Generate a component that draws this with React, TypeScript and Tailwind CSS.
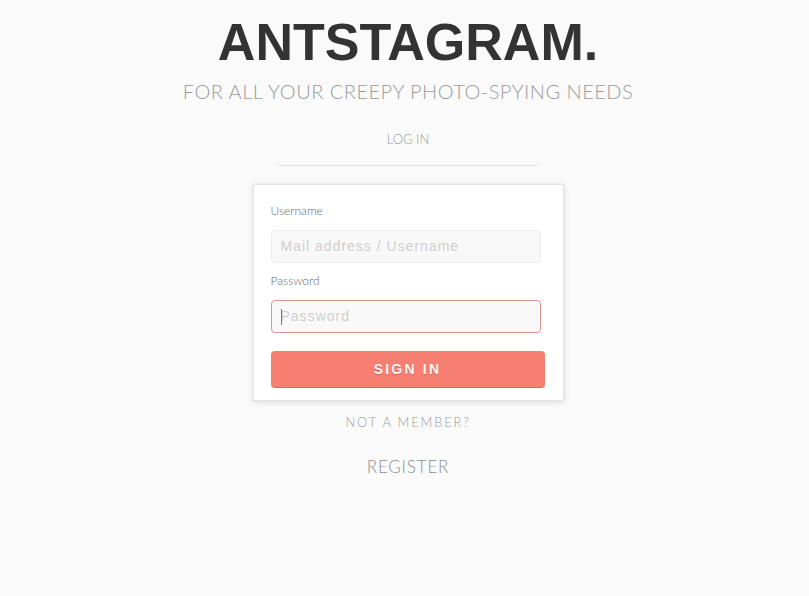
import React from "react";

export default function App() {
  const lato = { fontFamily: "Lato, 'Noto Sans', sans-serif" } as React.CSSProperties;
  return (
    <div className="min-h-[596px] w-full bg-[#fafafa] pl-[7px] flex flex-col items-center" style={lato}>
      <h1
        className="mt-[16px] text-[52px] leading-[52px] font-bold text-[#333333]"
        style={{ fontFamily: "'Liberation Sans', Arial, sans-serif" }}
      >
        ANTSTAGRAM.
      </h1>
      <p className="mt-[13px] text-[20px] leading-[20px] font-light text-[#9a9a9a] tracking-[0.5px]">
        FOR ALL YOUR CREEPY PHOTO-SPYING NEEDS
      </p>
      <p className="mt-[32px] text-[13px] leading-[13px] font-light text-[#9c9c9c]">LOG IN</p>
      <div className="mt-[19px] w-[260px] h-px bg-[#dedede]" />
      <div className="mt-[18px] w-[311px] bg-white border border-[#e3e3e3] shadow-[0_1px_6px_rgba(0,0,0,0.13)] pl-[17px] pt-[20px] pb-[12px] flex flex-col">
        <label className="text-[12px] leading-[12px] text-[#666] font-light">Username</label>
        <div className="mt-[13px] w-[270px] h-[33px] rounded-[4px] border border-[#ececec] bg-[#f8f8f8] flex items-center pl-[9px]">
          <span
            className="text-[14px] tracking-[1px] text-[#cfcfcf]"
            style={{ fontFamily: "'Liberation Sans', Arial, sans-serif" }}
          >
            Mail address / Username
          </span>
        </div>
        <label className="mt-[12px] text-[12px] leading-[12px] text-[#666] font-light">Password</label>
        <div className="relative mt-[13px] w-[270px] h-[33px] rounded-[4px] border border-[#e3928a] bg-[#f9f9f9] flex items-center pl-[9px]">
          <span className="absolute left-[9px] top-[8px] w-px h-[16px] bg-[#777]" />
          <span
            className="text-[14px] tracking-[1px] text-[#cfcfcf]"
            style={{ fontFamily: "'Liberation Sans', Arial, sans-serif" }}
          >
            Password
          </span>
        </div>
        <button
          className="mt-[18px] w-[274px] h-[37px] rounded-[4px] bg-[#f77f71] border-b border-[#d86b5e] text-[#fdf5f3] text-[14px] font-bold tracking-[2.2px] flex items-center justify-center [text-shadow:0_1px_1px_rgba(0,0,0,0.2)]"
          style={{ fontFamily: "'Liberation Sans', Arial, sans-serif" }}
        >
          SIGN IN
        </button>
      </div>
      <p className="mt-[15px] text-[13px] leading-[13px] font-light text-[#9c9c9c] tracking-[1.8px]">NOT A MEMBER?</p>
      <p className="mt-[29px] text-[17px] leading-[17px] font-light text-[#8f8f8f] tracking-[0.8px]">REGISTER</p>
    </div>
  );
}
